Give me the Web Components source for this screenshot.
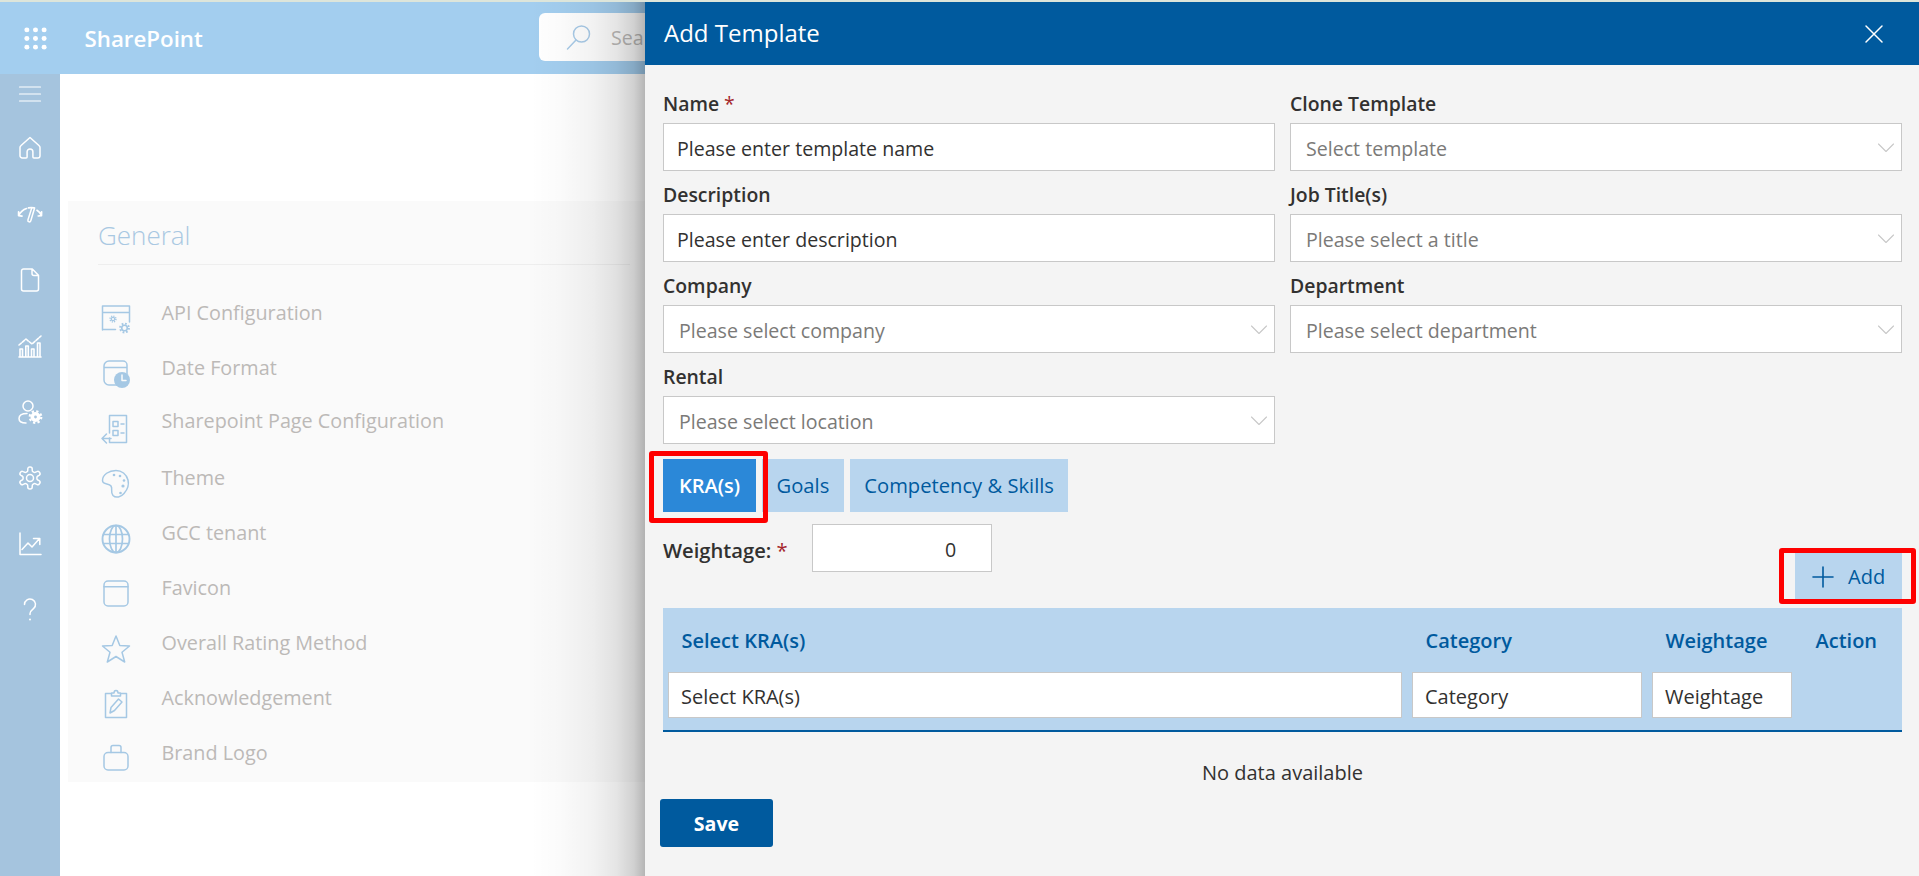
<!DOCTYPE html>
<html lang="en"><head><meta charset="utf-8"><title>Add Template</title>
<style>
html,body{margin:0;padding:0;height:100%;overflow:hidden}
body{font-family:"Open Sans","Noto Sans","Liberation Sans",sans-serif;font-size:19.6px;color:#323130;background:#fff}
</style></head><body>
<x-app>
  <x-topbar slot="top" brand="SharePoint" placeholder="Sea"></x-topbar>
  <x-sidebar slot="side">
    <x-nav-item first icon="menu"></x-nav-item><x-nav-item icon="home"></x-nav-item><x-nav-item icon="gauge"></x-nav-item><x-nav-item icon="doc"></x-nav-item><x-nav-item icon="bars"></x-nav-item><x-nav-item icon="usergear"></x-nav-item><x-nav-item icon="gear"></x-nav-item><x-nav-item icon="trend"></x-nav-item><x-nav-item icon="help"></x-nav-item>
  </x-sidebar>
  <x-settings-card slot="main" heading="General">
    <x-setting-item icon="api">API Configuration</x-setting-item>
    <x-setting-item icon="date">Date Format</x-setting-item>
    <x-setting-item icon="page" raised>Sharepoint Page Configuration</x-setting-item>
    <x-setting-item icon="palette">Theme</x-setting-item>
    <x-setting-item icon="globe">GCC tenant</x-setting-item>
    <x-setting-item icon="window">Favicon</x-setting-item>
    <x-setting-item icon="star">Overall Rating Method</x-setting-item>
    <x-setting-item icon="clip">Acknowledgement</x-setting-item>
    <x-setting-item icon="case">Brand Logo</x-setting-item>
  </x-settings-card>
  <x-panel slot="panel" heading="Add Template">
    <x-form-grid>
      <x-field label="Name" required><x-text-box>Please enter template name</x-text-box></x-field>
      <x-field label="Clone Template"><x-select-box>Select template</x-select-box></x-field>
      <x-field label="Description"><x-text-box>Please enter description</x-text-box></x-field>
      <x-field label="Job Title(s)"><x-select-box>Please select a title</x-select-box></x-field>
      <x-field label="Company"><x-select-box>Please select company</x-select-box></x-field>
      <x-field label="Department"><x-select-box>Please select department</x-select-box></x-field>
      <x-field label="Rental"><x-select-box>Please select location</x-select-box></x-field>
    </x-form-grid>
    <x-tab-row>
      <x-tab active marked>KRA(s)</x-tab><x-tab>Goals</x-tab><x-tab>Competency &amp; Skills</x-tab>
    </x-tab-row>
    <x-action-row>
      <x-weight-field label="Weightage:" value="0"></x-weight-field>
      <x-add-button>Add</x-add-button>
    </x-action-row>
    <x-filter-table no-data="No data available">
      <x-col-head>Select KRA(s)</x-col-head><x-col-head>Category</x-col-head><x-col-head>Weightage</x-col-head><x-col-head>Action</x-col-head>
      <x-filter-cell>Select KRA(s)</x-filter-cell><x-filter-cell>Category</x-filter-cell><x-filter-cell>Weightage</x-filter-cell><span></span>
    </x-filter-table>
    <x-save-button>Save</x-save-button>
  </x-panel>
</x-app>
<script>
const def=(name,css,html,init)=>customElements.define(name,class extends HTMLElement{
  constructor(){super();const r=this.attachShadow({mode:'open'});
    r.innerHTML=`<style>${css}</style>`+(typeof html==='function'?html(this):html);}
  connectedCallback(){const r=this.shadowRoot;
    r.querySelectorAll('[data-attr]').forEach(e=>e.textContent=this.getAttribute(e.dataset.attr)||'');
    if(init)init(this,r);}
});
const gearSm=(x,y,r,w)=>{const R=r+w*.8,d=(2*Math.PI*R/16).toFixed(2);return `<circle cx="${x}" cy="${y}" r="${r}" fill="none" stroke-width="${w*.8}"/><circle cx="${x}" cy="${y}" r="${R}" fill="none" stroke-width="${w}" stroke-linecap="butt" stroke-dasharray="${d} ${d}"/>`};
const ICONS={
 dots:'<g fill="currentColor" stroke="none"><circle cx="3" cy="3" r="2.6"/><circle cx="12" cy="3" r="2.6"/><circle cx="21" cy="3" r="2.6"/><circle cx="3" cy="12" r="2.6"/><circle cx="12" cy="12" r="2.6"/><circle cx="21" cy="12" r="2.6"/><circle cx="3" cy="21" r="2.6"/><circle cx="12" cy="21" r="2.6"/><circle cx="21" cy="21" r="2.6"/></g>',
 menu:'<path stroke-width="1.2" d="M1.5 5h21M1.5 12h21M1.5 19h21"/>',
 home:'<path d="M12 1.5 2.8 9.8a2 2 0 0 0-.8 1.6v8.3a2.3 2.3 0 0 0 2.3 2.3h3.8a1 1 0 0 0 1-1v-5.2a2.9 2.9 0 0 1 5.8 0V21a1 1 0 0 0 1 1h3.8a2.3 2.3 0 0 0 2.3-2.3v-8.3a2 2 0 0 0-.8-1.6z"/>',
 gauge:'<path stroke-width="1.7" d="M.6 13.6C2.5 10 5 7.6 8.5 6.500M.6 9.800l0 3.800 3.400.6M10.500 5.800c2-.4 3.500-.4 5.500 0M19 8.300c2 1.200 3.500 3 4.500 5.300M23.600 9.800l-.1 3.800-3.300.4"/><path stroke-width="1.500" d="M16.600 6 12.800 18.800c-.5 1.800-3.300 1.200-2.900-.7L13.600 6.400"/>',
 doc:'<path d="M5.500 1h8.800L20.500 7.300V21a2 2 0 0 1-2 2h-13a2 2 0 0 1-2-2V3a2 2 0 0 1 2-2zM14 1v4.500A2 2 0 0 0 16 7.500h4.500"/>',
 bars:'<g stroke-width="1.600"><path d="M1 23h22M2 15h2.500v8H2zM7.800 12h2.500v11H7.800zM13.500 15h2.500v8h-2.500zM19.500 9h2.500v14h-2.500z"/><path stroke-dasharray="3 1.500" d="M1 11l7-6 6 5 9-8"/></g>',
 usergear:'<circle cx="10" cy="6" r="5"/><path d="M8 23c-4 0-7-1-7-4.500 0-3.500 3.500-5 8-5"/><circle cx="17.500" cy="17" r="3.200" stroke-width="3.600"/><circle cx="17.500" cy="17" r="5.800" stroke-width="2.200" stroke-linecap="butt" stroke-dasharray="2.280 2.280"/>',
 gear:'<path d="M12.220 1h-.44a2 2 0 0 0-2 2v1.180a2 2 0 0 1-1 1.730l-.43.250a2 2 0 0 1-2 0l-1.150-.58a2 2 0 0 0-2.730.730l-.22.380a2 2 0 0 0 .730 2.730l1.150.6a2 2 0 0 1 1 1.720v.51a2 2 0 0 1-1 1.740l-1.150.59a2 2 0 0 0-.730 2.730l.22.380a2 2 0 0 0 2.730.730l1.150-.58a2 2 0 0 1 2 0l.43.250a2 2 0 0 1 1 1.730V21a2 2 0 0 0 2 2h.44a2 2 0 0 0 2-2v-1.180a2 2 0 0 1 1-1.730l.43-.250a2 2 0 0 1 2 0l1.150.58a2 2 0 0 0 2.730-.730l.22-.39a2 2 0 0 0-.730-2.730l-1.150-.58a2 2 0 0 1-1-1.740v-.5a2 2 0 0 1 1-1.740l1.150-.59a2 2 0 0 0 .730-2.730l-.22-.38a2 2 0 0 0-2.730-.730l-1.150.58a2 2 0 0 1-2 0l-.43-.250a2 2 0 0 1-1-1.730V3a2 2 0 0 0-2-2z"/><circle cx="12" cy="12" r="3.500"/>',
 trend:'<path d="M2 1v21.500h21M4 17.500l6-6.500 4 4 7.500-8.500M15.500 6.500h6.300v6"/>',
 help:'<path d="M6.500 6.500a5.500 5.500 0 1 1 9 4.200c-2 1.600-3.500 2.500-3.500 5v.8"/><circle cx="12" cy="21.500" r="1" fill="currentColor" stroke="none"/>',
 search:'<circle cx="15.500" cy="9" r="8"/><path d="M10 15 1.500 24"/>',
 close:'<path stroke-width="1.500" d="M1 1l16 16M17 1 1 17"/>',
 chevron:'<path stroke-width="1.100" d="M.5 1 8 8.500 15.500 1"/>',
 plus:'<path stroke-width="1.600" d="M10 0v20M0 10h20"/>',
 api:'<path d="M1.500 26V2h27v16M1.500 8.500h27M1.500 25.500h13"/>'+gearSm(12,15,1.700,1.500)+gearSm(23.500,24,2.800,2),
 date:'<path d="M3 21V7a5 5 0 0 1 5-5h14a4 4 0 0 1 4 4v9M3 8.500h23M3 21a5 5 0 0 0 5 5h9"/><circle cx="21" cy="21" r="8" fill="currentColor" stroke="none"/><path stroke="#fafafa" stroke-width="1.500" d="M21 16v5.500h4"/>',
 page:'<path d="M8.500 19V1.500h17v27h-17V24"/><path d="M12 7.500h5v5h-5zM12 16.500h5v5h-5zM20 10h3M20 19h3M1 24.500h9M5.500 20l-4.500 4.500 4.500 4.500"/>',
 palette:'<path d="M15 1.500C8 1.500 1.500 5.500 1.500 11.500c0 4.500 6.500 2.500 8.500 5.500 2 3-1 6 2 9.500 3 3 8 1.500 11-2 4-4.500 5-9.500 4-13.500C25.500 5 20.500 1.500 15 1.500z"/><g fill="currentColor" stroke="none"><circle cx="13" cy="6" r="1.300"/><circle cx="19" cy="7" r="1.300"/><circle cx="23" cy="11.500" r="1.300"/><circle cx="22" cy="17" r="1.600"/><circle cx="19.500" cy="24" r="1.300"/></g>',
 globe:'<circle cx="15" cy="15" r="13.500" stroke-width="1.900"/><ellipse cx="15" cy="15" rx="6.500" ry="13.500" stroke-width="1.700"/><path stroke-width="1.700" d="M15 1.500v27M2.500 10.500h25M2.500 19.500h25"/>',
 window:'<rect x="3" y="2" width="24" height="25" rx="4"/><path d="M3 7.800h24"/>',
 star:'<path d="M15 2l3.800 9.500 9.700.5-7.500 6.300 2.700 9.700-8.700-5.500-8.700 5.500 2.700-9.700L1.500 12l9.700-.5z"/>',
 clip:'<path d="M10.500 4.500H4.500v24h21v-24h-6M10.500 7h9V4h-2.500c0-3.500-4-3.500-4 0h-2.500z"/><path stroke-width="1.500" d="M9 24l1-5.500 7.500-8.500 3.500 3-7.500 8.500z"/>',
 case:'<rect x="3" y="8.500" width="24" height="17.500" rx="4"/><path d="M10 8.500V3.500a2 2 0 0 1 2-2h6a2 2 0 0 1 2 2v5"/>'
};
const VB={dots:24,menu:24,home:24,gauge:24,doc:24,bars:24,usergear:24,gear:24,trend:24,help:24,search:25,close:18,chevron:16,plus:20};
def('x-icon',':host{display:inline-flex;line-height:0;color:inherit}svg{display:block;overflow:visible}',
  h=>{const n=h.getAttribute('name'),v=VB[n]||30,s=h.getAttribute('size')||v,w=h.getAttribute('height')||(n==='chevron'?9:s);
    const vh=n==='chevron'?9:v;
    return `<svg width="${s}" height="${w}" viewBox="0 0 ${v} ${vh}" fill="none" stroke="currentColor" stroke-width="1.500" stroke-linecap="round" stroke-linejoin="round" aria-hidden="true">${ICONS[n]||''}</svg>`});

def('x-app',`:host{display:grid;height:876px;width:1919px;overflow:hidden;position:relative;
  grid-template:"strip strip" 2px "top top" 72px "side main" 1fr / 60px 1fr}
  .s{grid-area:strip;background:#dde5da}.t{grid-area:top;display:grid}.d{grid-area:side;display:grid}.m{grid-area:main;min-width:0}
  ::slotted([slot=panel]){position:absolute;top:2px;right:0;bottom:0}`,
 `<div class="s"></div><div class="t"><slot name="top"></slot></div><div class="d"><slot name="side"></slot></div><div class="m"><slot name="main"></slot></div><slot name="panel"></slot>`);

def('x-topbar',`:host{display:flex;align-items:center;background:#a3ceef;color:#fff;padding-left:24px;overflow:hidden}
  .b{font-weight:600;font-size:22.300px;margin-left:37.500px;width:454.500px;flex:none;line-height:1;position:relative;top:1px;white-space:nowrap}
  .s{display:flex;align-items:center;flex:none;width:700px;height:48px;background:#fff;border-radius:6px;color:#bdbbb9;font-size:19.600px;margin-top:-2px}
  .s x-icon{color:#a9cbe8;margin-left:27px;margin-right:20px}`,
 h=>`<x-icon name="dots" size="23"></x-icon><span class="b" data-attr="brand"></span><div class="s"><x-icon name="search" size="25"></x-icon><span data-attr="placeholder"></span></div>`);

def('x-sidebar',`:host{display:block;background:#a5c4de;color:#fff}`,`<slot></slot>`);
def('x-nav-item',`:host{display:flex;height:66px;align-items:center;justify-content:center}:host([first]){height:40.500px}`,
 h=>`<x-icon name="${h.getAttribute('icon')}" size="24"></x-icon>`);

def('x-settings-card',`:host{display:block;margin:127px 0 0 8px;height:581px;background:#fafafa;padding:0 30px;box-sizing:border-box}
  h2{margin:0;font-weight:300;font-size:26px;color:#a9c8e2;height:64px;line-height:68px;width:532px;border-bottom:1px solid #eee;box-sizing:border-box;margin-bottom:33px}
  .l{display:flex;flex-direction:column;gap:11px}`,
 `<h2 data-attr="heading"></h2><div class="l"><slot></slot></div>`);
def('x-setting-item',`:host{display:flex;height:44px;color:#bcb9b7;font-size:19.800px;line-height:29px;white-space:nowrap}
  x-icon{color:#a5c8e4;margin:6px 30.500px 0 3px}
  :host([raised]) span{margin-top:-2px}`,
 h=>`<x-icon name="${h.getAttribute('icon')}" size="30"></x-icon><span><slot></slot></span>`);

def('x-panel',`:host{display:flex;flex-direction:column;width:1274px;background:#f4f4f4;z-index:2}
  .sh{position:absolute;top:0;bottom:0;right:100%;width:115px;pointer-events:none;
   background:linear-gradient(to right,rgba(0,0,0,0),rgba(0,0,0,.015) 25%,rgba(0,0,0,.05) 55%,rgba(0,0,0,.1) 75%,rgba(0,0,0,.18) 90%,rgba(0,0,0,.29) 100%)}
  header{display:flex;align-items:center;justify-content:space-between;flex:none;height:63px;background:#005a9e;color:#fff;padding:0 36px 0 19px}
  h1{margin:0;font-size:24px;font-weight:400;position:relative;top:-1px}
  main{flex:1;padding:15px 17px 0 18px;display:flex;flex-direction:column;min-height:0}`,
 `<div class="sh"></div><header><h1 data-attr="heading"></h1><x-icon name="close" size="18"></x-icon></header><main><slot></slot></main>`);

def('x-form-grid',`:host{display:grid;grid-template-columns:612px 612px;column-gap:15px}`,`<slot></slot>`);
def('x-field',`:host{display:block}
  label{display:block;height:43px;line-height:48px;font-weight:600;font-size:19.400px}
  i{font-style:normal;font-weight:400;color:#a4262c;margin-left:5px}`,
 h=>`<label><span data-attr="label"></span>${h.hasAttribute('required')?'<i>*</i>':''}</label><slot></slot>`);
const boxCss=`:host{display:flex;align-items:center;height:48px;box-sizing:border-box;background:#fff;border:1px solid #c8c8c8;font-size:19.600px;padding-top:2px}`;
def('x-text-box',boxCss+`:host{padding-left:13px}`,`<slot></slot>`);
def('x-select-box',boxCss+`:host{padding-left:15px;color:#7b7a78;justify-content:space-between;padding-right:7px}x-icon{color:#c8c8c8;margin-top:-2px}`,
 `<span><slot></slot></span><x-icon name="chevron" size="16"></x-icon>`);

def('x-tab-row',`:host{display:flex;gap:6px;margin-top:15px}`,`<slot></slot>`);
def('x-tab',`:host{display:flex;align-items:center;height:53px;box-sizing:border-box;padding:0 14.500px 1px;background:#b8d5ee;color:#005a9e;font-size:20.200px;position:relative}
  :host([active]){background:#2b88d8;color:#fff;font-weight:600;width:93px;justify-content:center;padding:0 0 1px;z-index:1;font-size:20px}
  :host([marked])::after{content:"";position:absolute;left:-14px;right:-12px;top:-8px;bottom:-11px;border:5px solid #fe0000;border-radius:3px;box-sizing:border-box}`,
 `<slot></slot>`);

def('x-action-row',`:host{display:flex;justify-content:space-between;align-items:flex-end;height:75px;margin-top:12px}`,`<slot></slot>`);
def('x-weight-field',`:host{display:flex;align-self:flex-start;align-items:center;font-weight:600;font-size:20.200px}
  .k{display:flex;width:149px;flex:none;padding-top:3px;box-sizing:border-box}
  i{font-style:normal;font-weight:400;color:#a4262c;margin-left:5px}
  .v{display:block;width:180px;height:48px;line-height:49px;box-sizing:border-box;border:1px solid #c8c8c8;background:#fff;font-weight:400;font-size:19.600px;padding-left:132px}`,
 `<span class="k"><span data-attr="label"></span><i>*</i></span><span class="v" data-attr="value"></span>`);
def('x-add-button',`:host{display:flex;align-items:center;height:46px;width:107px;box-sizing:border-box;padding-left:18px;padding-top:1px;background:#b8d5ee;color:#005a9e;font-size:20px;position:relative}
  x-icon{margin-right:15px}
  :host::after{content:"";position:absolute;left:-16px;right:-14px;top:-5px;bottom:-5px;border:5px solid #fe0000;border-radius:3px;box-sizing:border-box}`,
 `<x-icon name="plus" size="20"></x-icon><slot></slot>`);

def('x-filter-table',`:host{display:block;margin-top:9px}
  .g{display:grid;grid-template-columns:744px 240px 150px 105px;grid-template-rows:64px 46px;padding-bottom:12px;background:#b8d5ee;border-bottom:2px solid #005a9e}
  .n{text-align:center;line-height:32px;padding-top:25px;margin-bottom:-1px;font-size:20px}`,
 `<div class="g"><slot></slot></div><div class="n" data-attr="no-data"></div>`);
def('x-col-head',`:host{display:flex;align-items:center;padding-left:18.500px;padding-top:1px;color:#005a9e;font-weight:600;font-size:20px}`,`<slot></slot>`);
def('x-filter-cell',`:host{display:flex;align-items:center;margin:0 5px;padding-left:12px;background:#fff;border:1px solid #c8c8c8;box-sizing:border-box;font-size:20px;padding-top:2px}`,`<slot></slot>`);
def('x-save-button',`:host{display:flex;align-items:center;justify-content:center;align-self:flex-start;width:113px;height:48px;padding-top:1px;box-sizing:border-box;margin:11px 0 0 -3px;background:#005a9e;color:#fff;border-radius:3px;font-weight:700;font-size:19.600px}`,`<slot></slot>`);
</script>
</body></html>
